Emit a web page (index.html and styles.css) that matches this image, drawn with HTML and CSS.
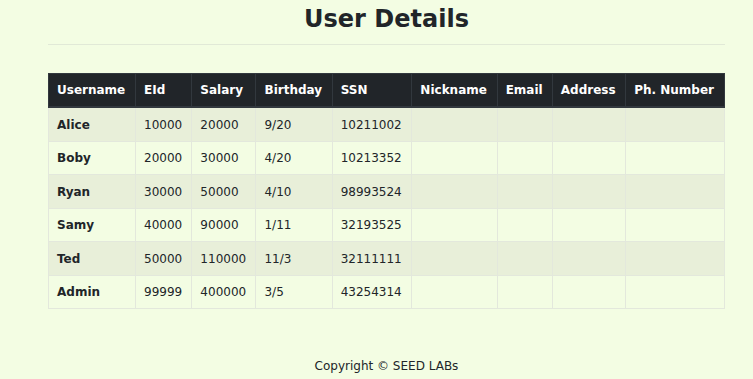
FILE: index.html
```html
<!DOCTYPE html>
<html lang="en">
<head>
<meta charset="utf-8">
<title>User Details</title>
<link rel="stylesheet" href="styles.css">
</head>
<body>
<div class="container">
  <h2 class="title">User Details</h2>
  <hr class="rule">
  <table class="users">
    <thead>
      <tr>
        <th>Username</th><th>EId</th><th>Salary</th><th>Birthday</th><th>SSN</th><th>Nickname</th><th>Email</th><th>Address</th><th>Ph. Number</th>
      </tr>
    </thead>
    <tbody>
      <tr><th>Alice</th><td>10000</td><td>20000</td><td>9/20</td><td>10211002</td><td></td><td></td><td></td><td></td></tr>
      <tr><th>Boby</th><td>20000</td><td>30000</td><td>4/20</td><td>10213352</td><td></td><td></td><td></td><td></td></tr>
      <tr><th>Ryan</th><td>30000</td><td>50000</td><td>4/10</td><td>98993524</td><td></td><td></td><td></td><td></td></tr>
      <tr><th>Samy</th><td>40000</td><td>90000</td><td>1/11</td><td>32193525</td><td></td><td></td><td></td><td></td></tr>
      <tr><th>Ted</th><td>50000</td><td>110000</td><td>11/3</td><td>32111111</td><td></td><td></td><td></td><td></td></tr>
      <tr><th>Admin</th><td>99999</td><td>400000</td><td>3/5</td><td>43254314</td><td></td><td></td><td></td><td></td></tr>
    </tbody>
  </table>
  <footer class="footer">Copyright © SEED LABs</footer>
</div>
</body>
</html>
```

FILE: styles.css
```css
html, body {
  margin: 0;
  padding: 0;
  background: #f3fde3;
}
body {
  font-family: "DejaVu Sans", sans-serif;
  font-size: 12px;
  line-height: 18px;
  color: #212529;
}
.container {
  width: 677px;
  margin-left: 48px;
  padding-top: 5px;
}
.title {
  margin: 0;
  font-size: 24px;
  line-height: 28.8px;
  font-weight: bold;
  text-align: center;
  color: #212529;
}
.rule {
  margin: 10px 0 28px;
  border: 0;
  border-top: 1px solid #e1e9d7;
  height: 0;
}
.users {
  width: 100%;
  border-collapse: collapse;
  border: 1px solid #e3e8dc;
}
.users th, .users td {
  padding: 7.25px 8px;
  text-align: left;
  vertical-align: top;
  border: 1px solid #e3e8dc;
  white-space: nowrap;
}
.users thead th {
  background: #212529;
  color: #fff;
  border-color: #32383e;
  border-bottom-width: 2px;
  font-weight: bold;
}
.users tbody th {
  font-weight: bold;
}
.users tbody tr:nth-child(odd) {
  background: #e8efd9;
}
.footer {
  margin-top: 48px;
  text-align: center;
  font-size: 12px;
  line-height: 18px;
}
```
